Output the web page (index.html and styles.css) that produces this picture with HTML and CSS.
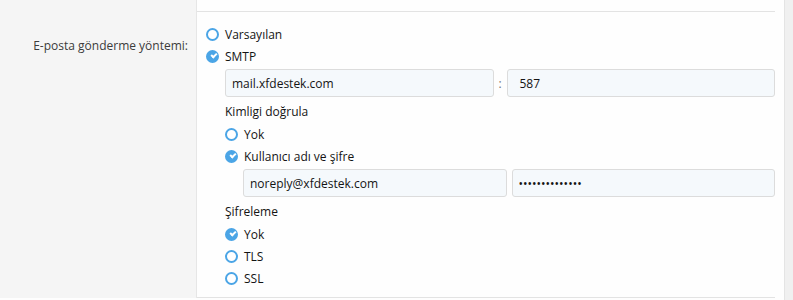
FILE: index.html
```html
<!DOCTYPE html>
<html lang="tr">
<head>
    <meta charset="UTF-8">
    <title>E-posta ayarları</title>
    <link rel="stylesheet" href="styles.css">
</head>
<body>
    <div class="page">
        <div class="form-block">
            <div class="row row-prev">
                <div class="row-label"></div>
                <div class="row-input"><div class="row-inner"></div></div>
            </div>
            <div class="row">
                <div class="row-label">E-posta gönderme yöntemi:</div>
                <div class="row-input">
                    <div class="row-inner">
                        <ul class="choices">
                            <li class="choice"><span class="radio"></span>Varsayılan</li>
                            <li class="choice"><span class="radio checked"></span>SMTP</li>
                        </ul>
                        <div class="sub">
                            <div class="input-pair">
                                <input class="input" type="text" value="mail.xfdestek.com">
                                <span class="sep">:</span>
                                <input class="input input-port" type="text" value="587">
                            </div>
                            <div class="sub-title">Kimligi doğrula</div>
                            <ul class="choices nested">
                                <li class="choice"><span class="radio"></span>Yok</li>
                                <li class="choice"><span class="radio checked"></span>Kullanıcı adı ve şifre</li>
                            </ul>
                            <div class="input-pair inner-pair">
                                <input class="input" type="text" value="noreply@xfdestek.com">
                                <input class="input" type="password" value="xxxxxxxxxxxxxx">
                            </div>
                            <div class="sub-title">Şifreleme</div>
                            <ul class="choices nested">
                                <li class="choice"><span class="radio checked"></span>Yok</li>
                                <li class="choice"><span class="radio"></span>TLS</li>
                                <li class="choice"><span class="radio"></span>SSL</li>
                            </ul>
                        </div>
                    </div>
                </div>
            </div>
        </div>
        <div class="edge"></div>
    </div>
</body>
</html>
```

FILE: styles.css
```css
* {
    box-sizing: border-box;
}

body {
    margin: 0;
    background: #f5f5f5;
    font-family: "Open Sans", "Noto Sans", sans-serif;
    font-size: 12px;
    color: #141414;
}

.page {
    display: flex;
    height: 300px;
    overflow: hidden;
}

.form-block {
    width: 784px;
    background: #fefefe;
}

.edge {
    flex: 1;
    border-left: 1px solid #e4e4e4;
    background: #f0f0f0;
}

.row {
    display: flex;
}

.row-label {
    width: 197px;
    background: #f5f5f5;
    border-right: 1px solid #e6e6e6;
    text-align: right;
    padding: 23px 8px 0 0;
    line-height: 22px;
    color: #3b3b3b;
}

.row-prev .row-label {
    padding: 0;
}

.row-input {
    flex: 1;
    padding-right: 9px;
}

.row-inner {
    padding: 11px 0 8px 9px;
    border-bottom: 1px solid #e3e3e3;
}

.row-prev .row-inner {
    height: 12px;
    padding: 0;
}

.choices {
    list-style: none;
    margin: 0;
    padding: 0;
}

.choice {
    display: flex;
    align-items: center;
    gap: 6px;
    height: 22px;
}

.radio {
    width: 13px;
    height: 13px;
    border-radius: 50%;
    border: 2px solid #4ba5e6;
    background: #fff;
    flex: none;
    position: relative;
}

.radio.checked {
    background: #4ba5e6;
}

.radio.checked::after {
    content: "";
    position: absolute;
    left: 2.5px;
    top: 1.5px;
    width: 4px;
    height: 2px;
    border-left: 2px solid #fff;
    border-bottom: 2px solid #fff;
    transform: rotate(-45deg);
}

.sub {
    padding-left: 19px;
}

.input-pair {
    display: flex;
    align-items: center;
    margin: 2px 0 4px;
}

.inner-pair {
    margin-left: 18px;
    gap: 5px;
}

.sep {
    width: 13px;
    text-align: center;
    color: #777;
}

.input {
    flex: 1;
    min-width: 0;
    height: 28px;
    border: 1px solid #dcdcdc;
    border-radius: 3px;
    background: #f5f9fc;
    padding: 0 6px;
    font: inherit;
    color: #141414;
}

.input-port {
    text-indent: 6px;
}

.sub-title {
    line-height: 22px;
}
```
